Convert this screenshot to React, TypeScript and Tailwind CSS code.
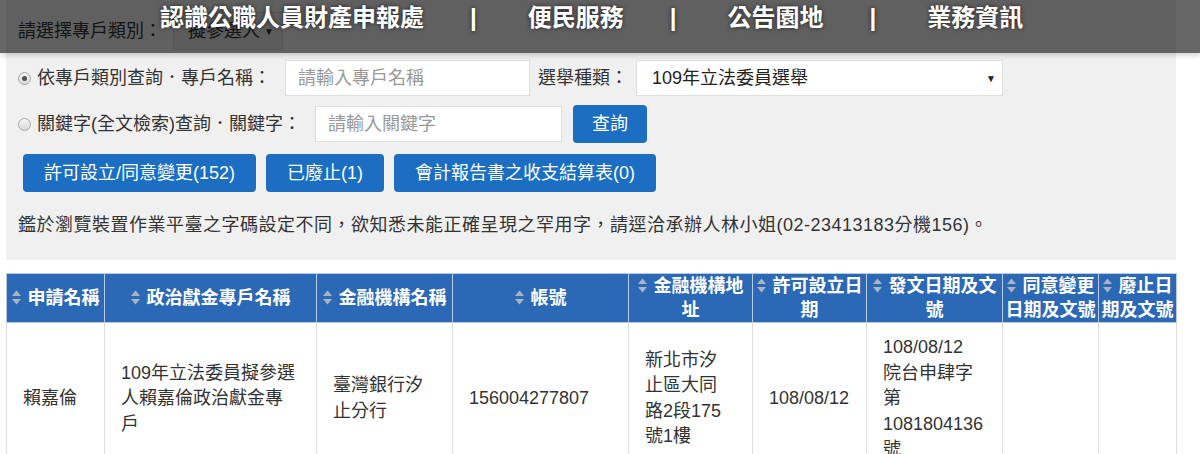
import { Fragment } from 'react';

const FONT = "font-['Liberation_Sans','Noto_Sans_CJK_TC',sans-serif]";

const NAV_ITEMS = ['認識公職人員財產申報處', '便民服務', '公告園地', '業務資訊'];

const COLUMNS = [
  { label: '申請名稱', width: 98 },
  { label: '政治獻金專戶名稱', width: 212 },
  { label: '金融機構名稱', width: 136 },
  { label: '帳號', width: 176 },
  { label: '金融機構地址', width: 124 },
  { label: '許可設立日期', width: 114 },
  { label: '發文日期及文號', width: 136 },
  { label: '同意變更日期及文號', width: 96 },
  { label: '廢止日期及文號', width: 78 },
];

function Radio({ checked }: { checked?: boolean }) {
  return (
    <span className="flex h-[13px] w-[13px] shrink-0 items-center justify-center rounded-full border border-[#a8a8a8] bg-linear-to-b from-[#f6f6f6] to-[#d9d9d9]">
      {checked && <span className="h-[5px] w-[5px] rounded-full bg-[#505050]" />}
    </span>
  );
}

function SortIcon() {
  return (
    <svg
      width="9"
      height="15"
      viewBox="0 0 9 15"
      className="mr-[7px] inline-block align-[-1px]"
    >
      <path d="M4.5 0.5 L9 6 L0 6 Z" fill="#aab3c0" />
      <path d="M4.5 14.5 L9 9 L0 9 Z" fill="#aab3c0" />
    </svg>
  );
}

function BlueButton({ children }: { children: React.ReactNode }) {
  return (
    <button
      type="button"
      className="h-[38px] rounded-[4px] bg-[#1b6ec2] px-[21px] text-[18px] text-white"
    >
      {children}
    </button>
  );
}

export default function App() {
  return (
    <div className={`relative min-h-[454px] bg-white ${FONT}`}>
      <header className="absolute inset-x-0 top-0 z-10 h-[53px] bg-black/60 shadow-[0_2px_6px_rgba(0,0,0,0.2)]">
        <nav className="flex pl-[160px] pt-[3px] text-[24px] font-bold leading-[30px] text-white [text-shadow:0_0_4px_rgba(0,0,0,0.7)]">
          {NAV_ITEMS.map((item, i) => (
            <Fragment key={item}>
              {i > 0 && <span className="ml-[46px] mr-[51px]">|</span>}
              <a href="#">{item}</a>
            </Fragment>
          ))}
        </nav>
      </header>

      <section className="mx-[6px] w-[1170px] bg-[#f0f0f0] px-3 pt-3 pb-[22px] text-[18px] text-[#333]">
        <div className="flex h-[38px] items-center">
          <span>請選擇專戶類別：</span>
          <div className="ml-[11px] flex h-[38px] w-[110px] items-center justify-between border border-[#d6d6d6] bg-[#e6e6e6] pl-[14px] pr-[8px]">
            <span>擬參選人</span>
            <span className="text-[10px]">▼</span>
          </div>
        </div>

        <div className="mt-[10px] flex h-[36px] items-center">
          <Radio checked />
          <span className="ml-[6px]">依專戶類別查詢．專戶名稱：</span>
          <input
            readOnly
            placeholder="請輸入專戶名稱"
            className="ml-[14px] h-[36px] w-[245px] border border-[#e0e0e0] bg-white px-3 text-[18px] placeholder:text-[#999]"
          />
          <span className="ml-[8px]">選舉種類：</span>
          <div className="ml-[8px] flex h-[36px] w-[367px] items-center justify-between border border-[#e0e0e0] bg-white pl-[15px] pr-[6px]">
            <span className="text-[#222]">109年立法委員選舉</span>
            <span className="text-[10px] text-[#222]">▼</span>
          </div>
        </div>

        <div className="mt-[9px] flex h-[38px] items-center">
          <Radio />
          <span className="ml-[6px]">關鍵字(全文檢索)查詢．關鍵字：</span>
          <input
            readOnly
            placeholder="請輸入關鍵字"
            className="ml-[14px] h-[36px] w-[247px] border border-[#e0e0e0] bg-white px-3 text-[18px] placeholder:text-[#999]"
          />
          <button
            type="button"
            className="ml-[11px] h-[38px] w-[74px] rounded-[4px] bg-[#1b6ec2] text-[18px] text-white"
          >
            查詢
          </button>
        </div>

        <div className="mt-[11px] flex gap-[10px] pl-[5px]">
          <BlueButton>許可設立/同意變更(152)</BlueButton>
          <BlueButton>已廢止(1)</BlueButton>
          <BlueButton>會計報告書之收支結算表(0)</BlueButton>
        </div>

        <p className="mt-[20px] leading-[26px] tracking-[0.5px]">
          鑑於瀏覽裝置作業平臺之字碼設定不同，欲知悉未能正確呈現之罕用字，請逕洽承辦人林小姐(02-23413183分機156)。
        </p>
      </section>

      <table className="mx-[6px] mt-[13px] w-[1170px] table-fixed border-collapse text-[18px]">
        <colgroup>
          {COLUMNS.map((c) => (
            <col key={c.label} style={{ width: c.width }} />
          ))}
        </colgroup>
        <thead>
          <tr className="h-[49px]">
            {COLUMNS.map((c) => (
              <th
                key={c.label}
                className="border border-[#b7cbe5] bg-[#2b69b6] px-[2px] text-center align-middle font-bold leading-[24px] text-white"
              >
                <SortIcon />
                {c.label}
              </th>
            ))}
          </tr>
        </thead>
        <tbody className="leading-[25.5px] text-[#333]">
          <tr>
            <td className="border border-[#ddd] py-3 pl-4 pr-4 align-middle">賴嘉倫</td>
            <td className="border border-[#ddd] py-3 pl-4 pr-[18px] align-middle">
              109年立法委員擬參選人賴嘉倫政治獻金專戶
            </td>
            <td className="border border-[#ddd] py-3 pl-4 pr-4 align-middle">臺灣銀行汐止分行</td>
            <td className="border border-[#ddd] py-3 pl-4 pr-4 align-middle">156004277807</td>
            <td className="border border-[#ddd] py-3 pl-4 pr-[20px] align-middle">
              新北市汐止區大同路2段175號1樓
            </td>
            <td className="border border-[#ddd] py-3 pl-4 pr-[2px] align-middle">108/08/12</td>
            <td className="border border-[#ddd] py-3 pl-4 pr-4 align-middle">
              108/08/12
              <br />
              院台申肆字第1081804136號
            </td>
            <td className="border border-[#ddd] py-3 align-middle" />
            <td className="border border-[#ddd] py-3 align-middle" />
          </tr>
        </tbody>
      </table>
    </div>
  );
}
